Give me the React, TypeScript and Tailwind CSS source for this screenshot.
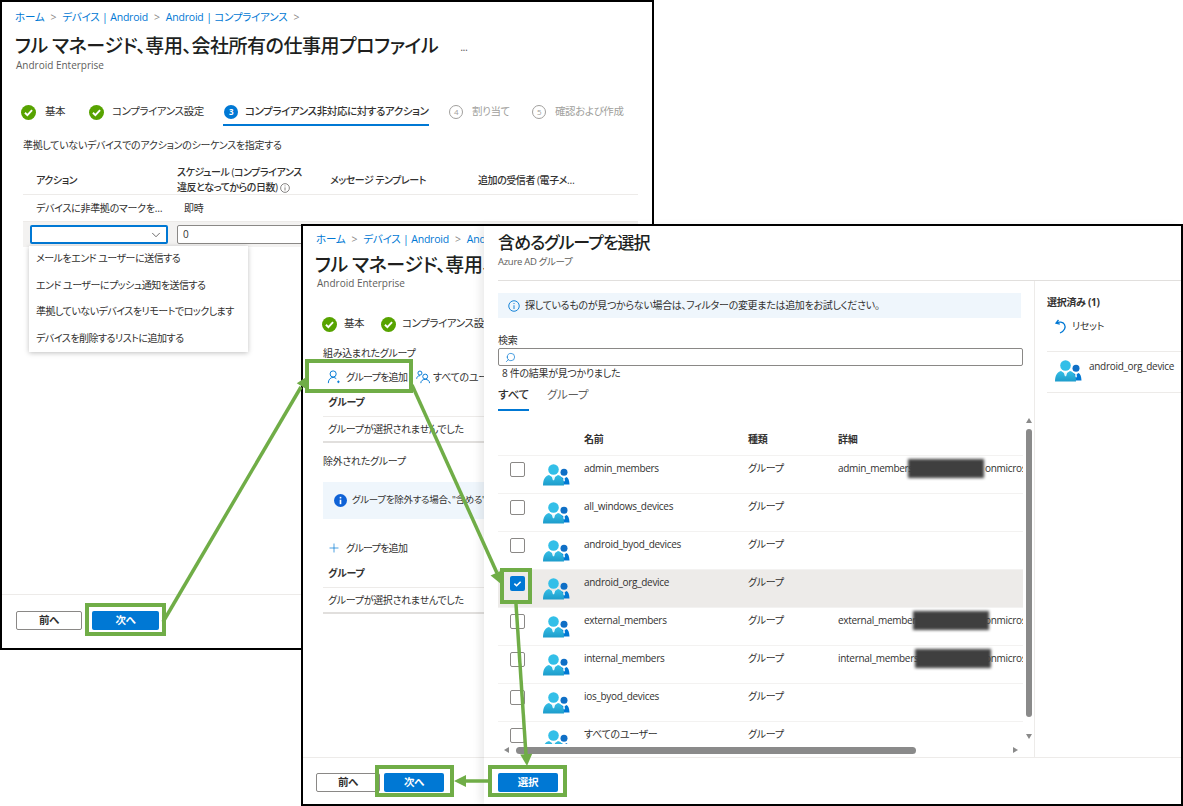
import { ChevronDown, Plus, Search } from 'lucide-react'

const rows = [
  { name: 'admin_members', detail: 'admin_members', tail: 'onmicrosoft', mask: 'left-[70px]' },
  { name: 'all_windows_devices' },
  { name: 'android_byod_devices' },
  { name: 'android_org_device', selected: true },
  { name: 'external_members', detail: 'external_members', tail: 'onmicrosoft', mask: 'left-[75px]' },
  { name: 'internal_members', detail: 'internal_members', tail: 'onmicrosoft', mask: 'left-[77px]' },
  { name: 'ios_byod_devices' },
  { name: 'すべてのユーザー' },
]

const menuItems = [
  'メールをエンド ユーザーに送信する',
  'エンド ユーザーにプッシュ通知を送信する',
  '準拠していないデバイスをリモートでロックします',
  'デバイスを削除するリストに追加する',
]

function CheckCircle() {
  return (
    <svg width="15" height="15" viewBox="0 0 16 16" className="shrink-0">
      <circle cx="8" cy="8" r="8" fill="#57a300" />
      <path d="M4.2 8.3l2.6 2.6 5-5.4" fill="none" stroke="#fff" strokeWidth="2" />
    </svg>
  )
}

function NumberCircle({ n, active }: { n: number; active?: boolean }) {
  return (
    <span
      className={
        active
          ? 'flex h-[14px] w-[14px] shrink-0 items-center justify-center rounded-full bg-[#0078d4] text-[8px] font-bold text-white'
          : 'flex h-[14px] w-[14px] shrink-0 items-center justify-center rounded-full border border-[#a19f9d] text-[8px] text-[#a19f9d]'
      }
    >
      {n}
    </span>
  )
}

function GroupIcon() {
  return (
    <svg width="27" height="22" viewBox="0 0 27 22" className="shrink-0">
      <defs>
        <linearGradient id="groupBody" x1="0" y1="0" x2="0" y2="1">
          <stop offset="0" stopColor="#35bfe6" />
          <stop offset="1" stopColor="#1d9ccb" />
        </linearGradient>
      </defs>
      <circle cx="21" cy="8.200" r="3.500" fill="#0f6fc6" />
      <path d="M15.500 20.500c.2-4.500 1.300-6.600 3.200-7.400l2.300 1.800 2.300-1.800c1.900.8 3 2.900 3.200 7.400z" fill="#0078d4" />
      <path d="M20.300 14.200h1.400l.4 2.600-1.100 1-1.100-1z" fill="#d7ecfa" />
      <circle cx="10.500" cy="5.500" r="5.300" fill="#33bfe8" />
      <path d="M0 21.500c0-6 2-9.500 6-10.500l4.500 3 4.500-3c4 1 6 4.500 6 10.500z" fill="url(#groupBody)" />
      <path d="M8.800 12.800h3.400l-1.100 3.400h-1.200z" fill="#e8f8fd" />
    </svg>
  )
}

function PersonAdd() {
  return (
    <svg width="14" height="14" viewBox="0 0 16 16" fill="none" stroke="#0078d4" strokeWidth="1.100" className="shrink-0">
      <circle cx="7" cy="4.500" r="3.500" />
      <path d="M1.500 15c0-3.700 2.200-6.500 5.500-6.500 1.500 0 2.700.5 3.600 1.400" />
      <path d="M13 12v3M11.500 13.500h3" />
    </svg>
  )
}

function PeopleIcon() {
  return (
    <svg width="14" height="14" viewBox="0 0 16 16" fill="none" stroke="#0078d4" strokeWidth="1.100" className="shrink-0">
      <circle cx="4.500" cy="3.500" r="2.300" />
      <circle cx="10.500" cy="7.500" r="2.800" />
      <path d="M.8 10c0-2 1.500-3.500 3.700-3.500M5.500 15c0-2.500 2-4.300 5-4.300s5 1.800 5 4.300" />
    </svg>
  )
}

function ResetIcon() {
  return (
    <svg width="13" height="15" viewBox="0 0 13 15" fill="none" stroke="#0078d4" strokeWidth="1.300" className="shrink-0">
      <path d="M4.500 1L2 4.200l3.800 1" />
      <path d="M2.300 4.100C5 2.500 9 2.900 10.500 5.500c1.500 2.800.2 6.500-4.500 8.500" />
    </svg>
  )
}

function InfoFilled() {
  return (
    <svg width="13" height="13" viewBox="0 0 16 16" className="shrink-0">
      <circle cx="8" cy="8" r="8" fill="#0f62d6" />
      <rect x="7" y="7" width="2" height="5.500" fill="#fff" />
      <rect x="7" y="3.500" width="2" height="2" fill="#fff" />
    </svg>
  )
}

function InfoOutline({ size = 12, color = '#0078d4' }: { size?: number; color?: string }) {
  return (
    <svg width={size} height={size} viewBox="0 0 16 16" className="inline-block shrink-0" fill="none">
      <circle cx="8" cy="8" r="7" stroke={color} strokeWidth="1.200" />
      <rect x="7.400" y="7" width="1.200" height="5" fill={color} />
      <rect x="7.400" y="4" width="1.200" height="1.400" fill={color} />
    </svg>
  )
}

function PrimaryButton({ label, width }: { label: string; width: string }) {
  return (
    <button className={`h-[19px] rounded-[2px] bg-[#0078d4] text-[10.500px] font-bold text-white ${width}`}>{label}</button>
  )
}

function SecondaryButton({ width }: { width: string }) {
  return (
    <button className={`h-[19px] rounded-[2px] border border-[#8a8886] bg-white text-[10.500px] font-bold text-[#323130] ${width}`}>
      前へ
    </button>
  )
}

function Crumbs({ children }: { children: React.ReactNode }) {
  return <div className="flex h-[14px] items-center gap-[6px] text-[10.500px] tracking-[-0.2px] text-[#0078d4]">{children}</div>
}

function Sep() {
  return <span className="text-[#8a8886]">&gt;</span>
}

function FirstWindow() {
  return (
    <div className="absolute left-0 top-0 flex h-[650px] w-[654px] flex-col whitespace-nowrap border-2 border-black bg-white">
      <div className="ml-[13px] mt-[9px]">
        <Crumbs>
          <span>ホーム</span>
          <Sep />
          <span>デバイス | Android</span>
          <Sep />
          <span>Android | コンプライアンス</span>
          <Sep />
        </Crumbs>
      </div>
      <div className="ml-[13px] mt-[8px] flex h-[26px] items-center text-[19px] font-medium leading-none tracking-[-0.46px] text-[#201f1e]">
        <span>フル マネージド、専用、会社所有の仕事用プロファイル</span>
        <span className="ml-[22px] text-[11px] text-[#605e5c]">...</span>
      </div>
      <div className="ml-[14px] -mt-[1px] h-[14px] text-[10px] leading-[14px] tracking-normal text-[#605e5c]">Android Enterprise</div>

      <div className="ml-[19px] mt-[32px] flex h-[22px] items-start text-[10.500px] tracking-[-0.4px]">
        <div className="flex h-[16px] w-[68px] items-center gap-[9px]"><CheckCircle /><span>基本</span></div>
        <div className="flex h-[16px] w-[134px] items-center gap-[8px]"><CheckCircle /><span>コンプライアンス設定</span></div>
        <div className="h-[22px] w-[206px] border-b-2 border-[#0078d4] font-medium">
          <div className="flex h-[16px] items-center gap-[7px] pl-[1px]"><NumberCircle n={3} active /><span>コンプライアンス非対応に対するアクション</span></div>
        </div>
        <div className="ml-[20px] flex h-[16px] w-[83px] items-center gap-[9px] text-[#a19f9d]"><NumberCircle n={4} /><span>割り当て</span></div>
        <div className="flex h-[16px] items-center gap-[9px] text-[#a19f9d]"><NumberCircle n={5} /><span>確認および作成</span></div>
      </div>

      <div className="ml-[21px] mt-[12px] h-[14px] leading-[14px]">準拠していないデバイスでのアクションのシーケンスを指定する</div>

      <div className="ml-[21px] mr-[14px] mt-[13px] grid h-[30px] grid-cols-[141px_153px_148px_1fr] items-center border-b border-[#edebe9] pl-[13px] font-medium leading-[15px] tracking-[-0.45px]">
        <span>アクション</span>
        <span>
          スケジュール (コンプライアンス
          <br />
          違反となってからの日数) <InfoOutline size={10} color="#605e5c" />
        </span>
        <span>メッセージ テンプレート</span>
        <span>追加の受信者 (電子メ…</span>
      </div>
      <div className="ml-[21px] mr-[14px] flex h-[27px] items-center border-b border-[#edebe9] pl-[13px]">
        <span className="w-[148px]">デバイスに非準拠のマークを…</span>
        <span>即時</span>
      </div>
      <div className="relative ml-[21px] mr-[14px] flex h-[25px] items-center gap-[9px] bg-[#f3f2f1] pl-[7px]">
        <div className="flex h-[19px] w-[138px] items-center justify-end rounded-[2px] border-2 border-[#0078d4] bg-white pr-[3px]">
          <ChevronDown size={14} strokeWidth={1.200} color="#323130" />
        </div>
        <div className="flex h-[19px] w-[200px] items-center rounded-[2px] border border-[#8a8886] bg-white pl-[5px]">0</div>
        <div className="absolute left-[6px] top-[24px] z-10 flex w-[219px] flex-col bg-white tracking-[-0.5px] shadow-[0_1px_5px_rgba(0,0,0,0.25)]">
          {menuItems.map((item) => (
            <div key={item} className="flex h-[26.500px] items-center pb-[1px] pl-[7px]">{item}</div>
          ))}
        </div>
      </div>

      <div className="mt-auto flex h-[54px] items-start gap-[10px] border-t border-[#edebe9] pl-[14px] pt-[16px]">
        <SecondaryButton width="w-[66px]" />
        <PrimaryButton label="次へ" width="w-[67px]" />
      </div>
    </div>
  )
}

function GroupTable() {
  return (
    <div className="ml-[20px]">
      <div className="flex h-[22px] items-start border-b border-[#edebe9] pl-[5px] font-bold leading-[14px]">グループ</div>
      <div className="flex h-[26px] items-center border-b-2 border-[#e1dfdd] pl-[5px]">グループが選択されませんでした</div>
    </div>
  )
}

function LeftPane() {
  return (
    <div className="flex w-[181px] shrink-0 flex-col overflow-hidden whitespace-nowrap">
      <div className="ml-[13px] mt-[7px]">
        <Crumbs>
          <span>ホーム</span>
          <Sep />
          <span>デバイス | Android</span>
          <Sep />
          <span>Android</span>
        </Crumbs>
      </div>
      <div className="ml-[12px] mt-[6px] flex h-[24px] items-center text-[19px] font-medium leading-none tracking-[-0.46px] text-[#201f1e]">フル マネージド、専用、会社所有の仕事用プロファイル</div>
      <div className="ml-[14px] -mt-[1px] h-[14px] text-[10px] leading-[14px] tracking-normal text-[#605e5c]">Android Enterprise</div>
      <div className="ml-[19px] mt-[26px] flex h-[16px] items-center text-[10.500px] tracking-[-0.4px]">
        <div className="flex w-[59px] shrink-0 items-center gap-[7px]"><CheckCircle /><span>基本</span></div>
        <div className="flex shrink-0 items-center gap-[6px]"><CheckCircle /><span>コンプライアンス設定</span></div>
      </div>
      <div className="ml-[20px] mt-[14px] h-[14px] leading-[14px]">組み込まれたグループ</div>
      <div className="ml-[24px] mt-[7px] flex h-[20px] items-center">
        <PersonAdd />
        <span className="ml-[5px] w-[70px] shrink-0 tracking-[-0.7px]">グループを追加</span>
        <PeopleIcon />
        <span className="ml-[3px]">すべてのユーザー</span>
      </div>
      <div className="mt-[8px]"><GroupTable /></div>
      <div className="ml-[20px] mt-[11px] h-[14px] leading-[14px]">除外されたグループ</div>
      <div className="ml-[20px] mt-[14px] flex h-[37px] items-center bg-[#eff6fc] pl-[11px] text-[9.500px]">
        <InfoFilled />
        <span className="ml-[5px]">グループを除外する場合、"含める" と</span>
      </div>
      <div className="ml-[24px] mt-[20px] flex h-[18px] items-center">
        <Plus size={14} strokeWidth={1.200} color="#0078d4" className="shrink-0" />
        <span className="ml-[5px] tracking-[-0.7px]">グループを追加</span>
      </div>
      <div className="mt-[9px]"><GroupTable /></div>
      <div className="mt-auto flex h-[47px] items-start gap-[4px] border-t border-[#edebe9] pl-[13px] pt-[15px]">
        <SecondaryButton width="w-[64px]" />
        <PrimaryButton label="次へ" width="w-[60px]" />
      </div>
    </div>
  )
}

function ResultRow({ row }: { row: (typeof rows)[number] }) {
  return (
    <div className={`grid h-[38px] grid-cols-[86px_164px_90px_185px] border-b border-[#f3f2f1] ${row.selected ? 'bg-[#edebe9]' : ''}`}>
      <div className="flex items-start gap-[18px] pl-[12px] pt-[6px]">
        {row.selected ? (
          <span className="flex h-[15px] w-[15px] shrink-0 items-center justify-center rounded-[2px] bg-[#0078d4]">
            <svg width="9" height="9" viewBox="0 0 10 10"><path d="M1.500 5.200l2.500 2.300 4.500-4.500" fill="none" stroke="#fff" strokeWidth="1.800" /></svg>
          </span>
        ) : (
          <span className="h-[15px] w-[15px] shrink-0 rounded-[2px] border border-[#8a8886] bg-white" />
        )}
        <span className="mt-[2px]"><GroupIcon /></span>
      </div>
      <div className="pt-[4px] leading-[16px]">{row.name}</div>
      <div className="pt-[4px] leading-[16px]">グループ</div>
      <div className="relative overflow-hidden whitespace-nowrap pt-[4px] leading-[16px]">
        {row.detail && (
          <>
            <span className="inline-block w-[147px]">{row.detail}</span>
            <span>{row.tail}</span>
            <span className={`absolute top-[3px] h-[19px] w-[76px] bg-[#3f3f3f] blur-[1.500px] ${row.mask}`} />
          </>
        )}
      </div>
    </div>
  )
}

function Blade() {
  return (
    <div className="flex min-w-0 flex-1 flex-col whitespace-nowrap bg-white shadow-[-4px_0_8px_rgba(0,0,0,0.08)]">
      <div className="ml-[14px] h-[55px] border-b border-[#e1dfdd]">
        <div className="mt-[5px] h-[24px] text-[17px] font-medium leading-[24px] tracking-[-1px] text-[#201f1e]">含めるグループを選択</div>
        <div className="h-[14px] text-[9.500px] leading-[14px] text-[#605e5c]">Azure AD グループ</div>
      </div>
      <div className="flex min-h-0 flex-1">
        <div className="flex w-[551px] shrink-0 flex-col border-r border-[#edebe9] pl-[14px]">
          <div className="mr-[14px] mt-[12px] flex h-[25px] w-[523px] items-center bg-[#eff6fc] pl-[10px]">
            <InfoOutline />
            <span className="ml-[5px]">探しているものが見つからない場合は、フィルターの変更または追加をお試しください。</span>
          </div>
          <div className="mt-[15px] h-[14px] leading-[14px]">検索</div>
          <div className="mt-[1px] flex h-[18px] w-[525px] items-center rounded-[2px] border border-[#8a8886] pl-[6px]">
            <Search size={11} strokeWidth={1.500} color="#0078d4" className="-scale-x-100" />
          </div>
          <div className="h-[14px] pl-[4px] leading-[14px]">8 件の結果が見つかりました</div>
          <div className="flex h-[31px] items-start gap-[18px] text-[11.500px]">
            <div className="flex h-[31px] w-[31px] items-start justify-center border-b-2 border-[#0078d4] pt-[7px] font-medium leading-[16px]">すべて</div>
            <div className="pt-[7px] leading-[16px] text-[#605e5c]">グループ</div>
          </div>
          <div className="flex h-[333px] overflow-hidden">
            <div className="w-[525px] shrink-0 overflow-hidden">
              <div className="grid h-[45px] grid-cols-[86px_164px_90px_185px] border-b border-[#f3f2f1] pt-[21px] font-bold leading-[14px]">
                <span />
                <span>名前</span>
                <span>種類</span>
                <span>詳細</span>
              </div>
              {rows.map((row) => <ResultRow key={row.name} row={row} />)}
            </div>
            <div className="ml-[2px] flex w-[8px] flex-col items-center">
              <span className="mt-[7px] h-0 w-0 border-x-[3px] border-b-[5px] border-x-transparent border-b-[#8a8a8a]" />
              <span className="mt-[6px] h-[288px] w-[6px] rounded-full bg-[#8a8a8a]" />
              <span className="mt-[17px] h-0 w-0 border-x-[3px] border-t-[5px] border-x-transparent border-t-[#8a8a8a]" />
            </div>
          </div>
          <div className="flex h-[12px] w-[520px] items-center">
            <span className="ml-[6px] h-0 w-0 border-y-[3px] border-r-[5px] border-y-transparent border-r-[#8a8a8a]" />
            <span className="ml-[7px] h-[7px] w-[400px] rounded-full bg-[#8a8a8a]" />
            <span className="ml-[97px] h-0 w-0 border-y-[3px] border-l-[5px] border-y-transparent border-l-[#8a8a8a]" />
          </div>
        </div>
        <div className="min-w-0 flex-1 pl-[12px]">
          <div className="mt-[14px] h-[14px] font-bold leading-[14px]">選択済み (1)</div>
          <div className="ml-[7px] mt-[9px] flex h-[16px] items-center">
            <ResetIcon />
            <span className="ml-[5px]">リセット</span>
          </div>
          <div className="mt-[17px] flex h-[42px] items-start border-y border-[#edebe9] pl-[8px] pt-[8px]">
            <GroupIcon />
            <span className="ml-[7px] -mt-[1px]">android_org_device</span>
          </div>
        </div>
      </div>
      <div className="flex h-[47px] items-start border-t border-[#edebe9] pl-[14px] pt-[15px]">
        <PrimaryButton label="選択" width="w-[60px]" />
      </div>
    </div>
  )
}

function Annotations() {
  const head = (x: number, y: number, dx: number, dy: number) => {
    const len = Math.hypot(dx, dy)
    const ux = dx / len
    const uy = dy / len
    const bx = x - ux * 12
    const by = y - uy * 12
    return `${x},${y} ${bx - uy * 6},${by + ux * 6} ${bx + uy * 6},${by - ux * 6}`
  }
  return (
    <>
      <div className="absolute left-[85px] top-[603px] z-20 h-[33px] w-[81px] border-4 border-[#70ad47]" />
      <div className="absolute left-[305px] top-[359px] z-20 h-[34px] w-[108px] border-4 border-[#70ad47]" />
      <div className="absolute left-[500px] top-[568px] z-20 h-[36px] w-[32px] border-4 border-[#70ad47]" />
      <div className="absolute left-[375px] top-[765px] z-20 h-[32px] w-[79px] border-4 border-[#70ad47]" />
      <div className="absolute left-[488px] top-[765px] z-20 h-[32px] w-[79px] border-4 border-[#70ad47]" />
      <svg width="1183" height="806" className="pointer-events-none absolute left-0 top-0 z-20">
        <g stroke="#70ad47" strokeWidth="3.500" fill="#70ad47">
          <line x1="163" y1="622" x2="301" y2="387" />
          <line x1="412" y1="385" x2="497" y2="573" />
          <line x1="516" y1="604" x2="526" y2="755" />
          <line x1="488" y1="781" x2="463" y2="781" />
        </g>
        <g fill="#70ad47">
          <polygon points={head(308, 376, 139, -236)} />
          <polygon points={head(501, 584, 85, 188)} />
          <polygon points={head(527, 766, 10, 151)} />
          <polygon points={head(454, 781, -25, 0)} />
        </g>
      </svg>
    </>
  )
}

export default function App() {
  return (
    <div className="relative h-[806px] w-[1183px] overflow-hidden bg-white font-['Open_Sans','Noto_Sans_CJK_JP',sans-serif] text-[10px] tracking-[-0.3px] text-[#323130] [font-feature-settings:'palt']">
      <FirstWindow />
      <div className="absolute left-[301px] top-[224px] z-10 flex h-[582px] w-[882px] border-2 border-black bg-white">
        <LeftPane />
        <Blade />
      </div>
      <Annotations />
    </div>
  )
}
